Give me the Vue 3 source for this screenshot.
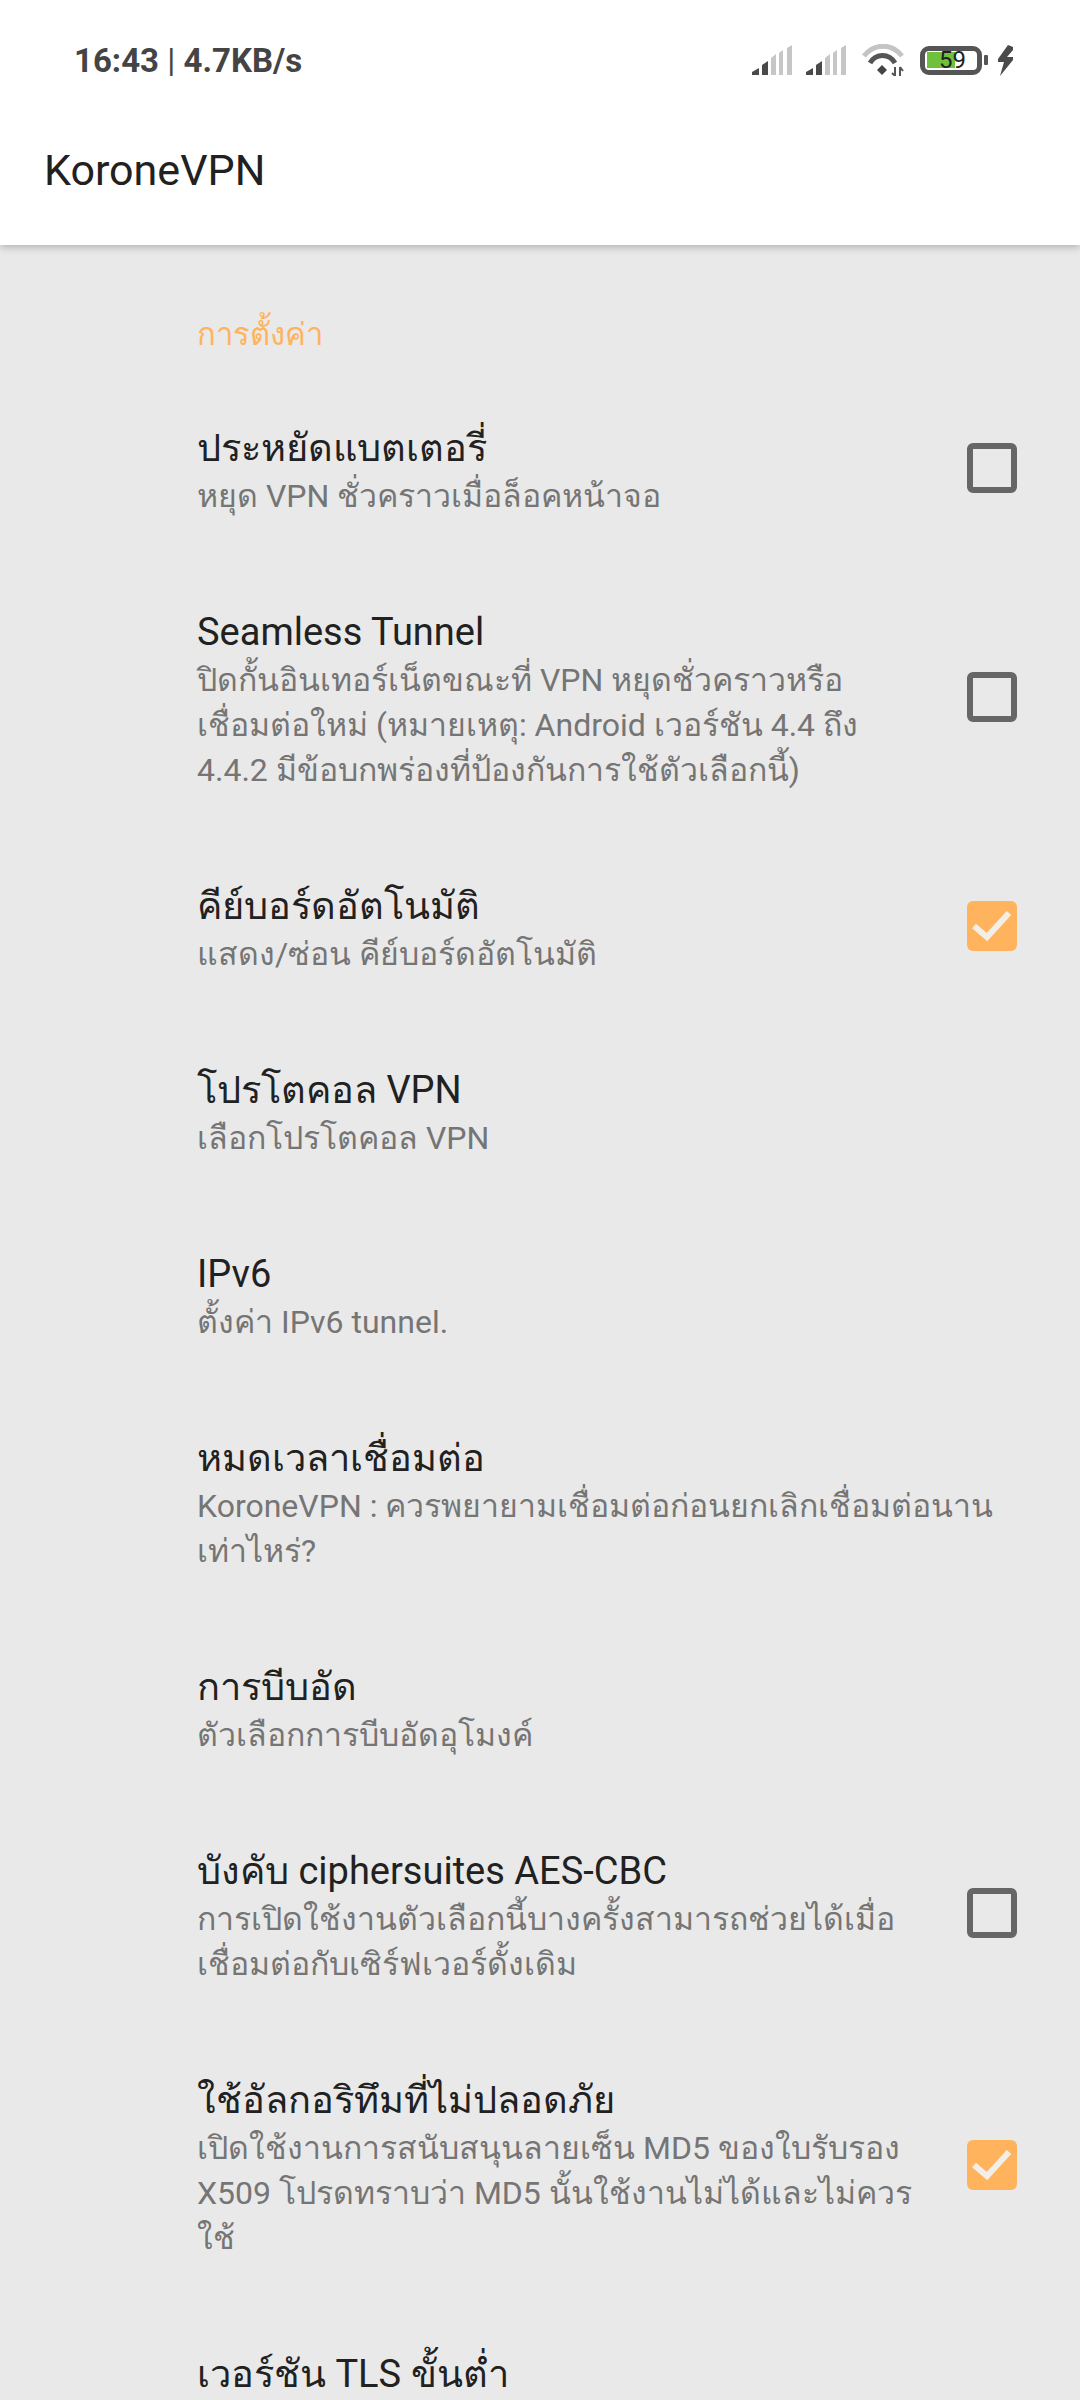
<template>
  <div class="screen">
    <header class="top">
      <div class="status">
        <div class="clock"><b>16:43</b> <span class="sep">|</span> <b>4.7KB/s</b></div>
        <div class="status-icons">
          <svg v-for="n in 2" :key="n" class="signal" width="41" height="30" viewBox="0 0 41 30">
            <path d="M0 30V27L7 23V30Z" fill="#4a4a4a" />
            <path d="M10 30V20L16 16V30Z" fill="#4a4a4a" />
            <path d="M19 30V13L24 9V30Z" fill="#c6c6c6" />
            <path d="M27 30V8L31 5V30Z" fill="#c6c6c6" />
            <path d="M35 30V3L40 0V30Z" fill="#c6c6c6" />
          </svg>
          <svg class="wifi" width="42" height="32" viewBox="0 0 42 32">
            <path d="M2 12C12 -1 30 -1 40 12" fill="none" stroke="#c4c4c4" stroke-width="5" />
            <path d="M8 19C14 9 27 9 33 19" fill="none" stroke="#555" stroke-width="5" />
            <path d="M15 26L20 21L25 26L20 31Z" fill="#444" />
            <path d="M33 23V32M30 29L33 32M38 23V32M38 23L41 27" fill="none" stroke="#555" stroke-width="2" />
          </svg>
          <div class="battery">
            <div class="battery-level"></div>
            <span class="battery-num">59</span>
          </div>
          <div class="battery-nub"></div>
          <svg class="bolt" width="17" height="31" viewBox="0 0 17 31">
            <path d="M11 0L1 14V17H7L3 31L16 15V12H10L16 5V2Z" fill="#4a4a4a" />
          </svg>
        </div>
      </div>
      <div class="toolbar">KoroneVPN</div>
    </header>

    <main class="list">
      <div class="section">การตั้งค่า</div>
      <div v-for="item in items" :key="item.title" class="row">
        <div class="row-text">
          <div class="row-title">{{ item.title }}</div>
          <div v-for="line in item.lines" :key="line" class="row-sub">{{ line }}</div>
        </div>
        <div v-if="item.check !== undefined" class="check" :class="{ on: item.check }">
          <svg v-if="item.check" width="50" height="50" viewBox="0 0 50 50">
            <path d="M7 25L20 36L42 12" fill="none" stroke="#f3efe8" stroke-width="6" />
          </svg>
        </div>
      </div>
    </main>
  </div>
</template>

<script setup>
const items = [
  { title: 'ประหยัดแบตเตอรี่', lines: ['หยุด VPN ชั่วคราวเมื่อล็อคหน้าจอ'], check: false },
  {
    title: 'Seamless Tunnel',
    lines: [
      'ปิดกั้นอินเทอร์เน็ตขณะที่ VPN หยุดชั่วคราวหรือ',
      'เชื่อมต่อใหม่ (หมายเหตุ: Android เวอร์ชัน 4.4 ถึง',
      '4.4.2 มีข้อบกพร่องที่ป้องกันการใช้ตัวเลือกนี้)'
    ],
    check: false
  },
  { title: 'คีย์บอร์ดอัตโนมัติ', lines: ['แสดง/ซ่อน คีย์บอร์ดอัตโนมัติ'], check: true },
  { title: 'โปรโตคอล VPN', lines: ['เลือกโปรโตคอล VPN'] },
  { title: 'IPv6', lines: ['ตั้งค่า IPv6 tunnel.'] },
  {
    title: 'หมดเวลาเชื่อมต่อ',
    lines: ['KoroneVPN : ควรพยายามเชื่อมต่อก่อนยกเลิกเชื่อมต่อนาน', 'เท่าไหร่?']
  },
  { title: 'การบีบอัด', lines: ['ตัวเลือกการบีบอัดอุโมงค์'] },
  {
    title: 'บังคับ ciphersuites AES-CBC',
    lines: ['การเปิดใช้งานตัวเลือกนี้บางครั้งสามารถช่วยได้เมื่อ', 'เชื่อมต่อกับเซิร์ฟเวอร์ดั้งเดิม'],
    check: false
  },
  {
    title: 'ใช้อัลกอริทึมที่ไม่ปลอดภัย',
    lines: [
      'เปิดใช้งานการสนับสนุนลายเซ็น MD5 ของใบรับรอง',
      'X509 โปรดทราบว่า MD5 นั้นใช้งานไม่ได้และไม่ควร',
      'ใช้'
    ],
    check: true
  },
  { title: 'เวอร์ชัน TLS ขั้นต่ำ', lines: [] }
]
</script>

<style scoped>
.screen {
  width: 1080px;
  height: 2400px;
  overflow: hidden;
  background: #e9e9e9;
  font-family: Roboto, "Noto Sans", sans-serif;
}

.top {
  height: 245px;
  background: #fff;
  box-shadow: 0 2px 8px rgba(0, 0, 0, 0.25);
}

.status {
  height: 120px;
  display: flex;
  justify-content: space-between;
  align-items: center;
  padding: 0 66px 0 74px;
}

.clock {
  font-size: 33px;
  color: #444;
}

.sep {
  font-weight: 400;
}

.status-icons {
  display: flex;
  align-items: center;
  position: relative;
}

.signal {
  margin-right: 13px;
}

.wifi {
  margin: 0 16px 0 2px;
}

.battery {
  position: relative;
  width: 62px;
  height: 29px;
  box-sizing: border-box;
  border: 5px solid #555;
  border-radius: 9px;
  padding: 1.5px 2px;
}

.battery-level {
  width: 58%;
  height: 100%;
  background: #6fc13d;
}

.battery-num {
  position: absolute;
  left: 14px;
  top: -5px;
  font-size: 24px;
  line-height: 29px;
  color: #222;
}

.battery-nub {
  width: 4px;
  height: 10px;
  margin: 0 9px 0 2px;
  background: #555;
  border-radius: 1px;
}

.toolbar {
  height: 125px;
  padding: 0 44px;
  font-size: 43px;
  line-height: 100px;
  color: #212121;
}

.list {
  padding-left: 197px;
  padding-right: 63px;
}

.section {
  padding: 69px 0 20px;
  font-size: 31px;
  line-height: 42px;
  color: #ffb35c;
}

.row {
  display: flex;
  align-items: center;
  justify-content: space-between;
  padding: 47px 0 41px;
}

.row-text {
  min-width: 0;
}

.row-title {
  font-size: 38px;
  line-height: 51px;
  color: #212121;
  white-space: nowrap;
}

.row-sub {
  font-size: 32px;
  line-height: 45px;
  color: #757575;
  white-space: nowrap;
}

.check {
  flex: none;
  width: 50px;
  height: 50px;
  margin-bottom: 7px;
  box-sizing: border-box;
  border: 6px solid #666;
  border-radius: 6px;
}

.check.on {
  border: 0;
  background: #ffb35c;
}

.check svg {
  display: block;
}
</style>
